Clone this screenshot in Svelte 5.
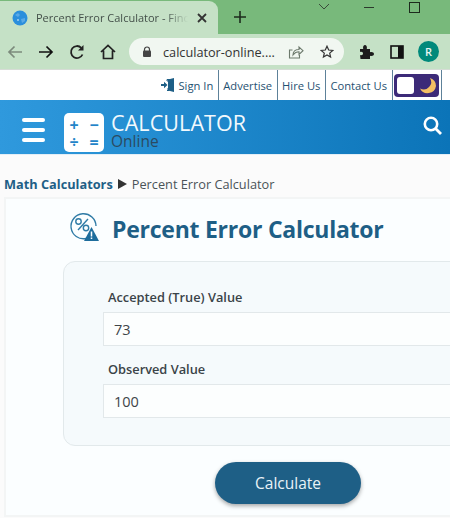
<script>
    let accepted = "73";
    let observed = "100";
    const links = ["Advertise", "Hire Us", "Contact Us"];
</script>

<div class="page">
    <div class="tabstrip">
        <div class="tab">
            <svg class="favicon" width="16" height="16" viewBox="0 0 16 16">
                <circle cx="8" cy="8" r="7.500" fill="#2b8fdc" />
                <path d="M3 5l3-2 2 2-2 2zM9 9l4-1 0 3-3 2z" fill="#5aa9e6" />
                <circle cx="6" cy="10" r="1" fill="#a6d0f0" />
            </svg>
            <span class="tabtitle">Percent Error Calculator - Find</span>
            <svg class="tabclose" width="10" height="10" viewBox="0 0 10 10">
                <path d="M1 1l8 8M9 1l-8 8" stroke="#333" stroke-width="1.800" />
            </svg>
        </div>
        <svg class="newtab" width="12" height="12" viewBox="0 0 12 12">
            <path d="M6 0v12M0 6h12" stroke="#1d2b1d" stroke-width="1.600" />
        </svg>
        <div class="winctl">
            <svg width="12" height="8" viewBox="0 0 12 8">
                <path d="M1 1l5 5 5-5" fill="none" stroke="#3a4a3a" stroke-width="1" />
            </svg>
            <span class="min"></span>
            <span class="max"></span>
        </div>
    </div>

    <div class="toolbar">
        <svg class="nav" width="16" height="14" viewBox="0 0 16 14">
            <path d="M15 7H2M7.500 1.500L2 7l5.500 5.500" fill="none" stroke="#7c8a7c" stroke-width="1.700" />
        </svg>
        <svg class="nav" width="16" height="14" viewBox="0 0 16 14">
            <path d="M1 7h13M8.500 1.500L14 7l-5.500 5.500" fill="none" stroke="#111" stroke-width="1.700" />
        </svg>
        <svg class="nav" width="16" height="16" viewBox="0 0 16 16">
            <path d="M13.500 10.500A6 6 0 1 1 12.300 3.800" fill="none" stroke="#222" stroke-width="1.800" />
            <path d="M14.500 1v5.500H9z" fill="#222" />
        </svg>
        <svg class="nav" width="16" height="16" viewBox="0 0 16 16">
            <path d="M1 8l7-6.500L15 8M3.500 6.500V14.500h9V6.500" fill="none" stroke="#222" stroke-width="1.700" />
        </svg>
        <div class="omnibox">
            <svg width="10" height="11" viewBox="0 0 10 11">
                <path d="M2.500 5V3.500a2.500 2.500 0 0 1 5 0V5" fill="none" stroke="#444" stroke-width="1.200" />
                <rect x="1" y="4.500" width="8" height="6.500" rx="1" fill="#444" />
            </svg>
            <span class="url">calculator-online....</span>
            <svg class="share" width="16" height="14" viewBox="0 0 16 14">
                <path d="M4.500 5H1.500v8h10v-3" fill="none" stroke="#6d7a6d" stroke-width="1.100" />
                <path d="M5 10c0-4 3-5.500 6-5.500V2l4 3.700-4 3.700V6.800C8.500 6.800 6.500 8 5 10z" fill="none" stroke="#6d7a6d" stroke-width="1.100" />
            </svg>
            <svg width="14" height="14" viewBox="0 0 14 14">
                <path d="M7 1.200l1.700 3.800 4.100.4-3.100 2.700.9 4-3.600-2.100-3.600 2.100.9-4L1.200 5.400l4.100-.4z" fill="none" stroke="#333" stroke-width="1.200" />
            </svg>
        </div>
        <svg class="puzzle" width="15" height="15" viewBox="0 0 15 15">
            <path d="M1 5h3.200C3.600 2.500 4.800 1 6 1s2.400 1.500 1.800 4H11v3.200c2.300-.6 4 .4 4 1.800s-1.700 2.400-4 1.800V15H1.500L1 11c2 .6 3-.3 3-1.500S3 7.400 1 8z" fill="#1c1c1c" />
        </svg>
        <svg class="panel" width="14" height="14" viewBox="0 0 14 14">
            <rect x="1" y="1" width="12" height="12" fill="none" stroke="#111" stroke-width="1.600" />
            <rect x="8" y="1" width="5" height="12" fill="#111" />
        </svg>
        <span class="avatar">R</span>
    </div>

    <nav class="topnav">
        <a class="signin" href="#top">
            <svg width="14" height="14" viewBox="0 0 14 14">
                <path d="M7 1.500L13 0v14l-6-1.500z" fill="#1e5f86" />
                <path d="M8 3H6V1.500h6M6 11h2v1.500H6" fill="none" stroke="#1e5f86" stroke-width="1" />
                <path d="M0 6h3V3.800L6.500 7 3 10.200V8H0z" fill="#1e5f86" />
            </svg>
            Sign In
        </a>
        {#each links as link}
            <a href="#top">{link}</a>
        {/each}
        <div class="toggle-cell">
            <div class="toggle">
                <span class="knob"></span>
                <svg width="18" height="18" viewBox="0 0 18 18">
                    <path d="M11 1a7.500 7.500 0 0 1-10 10.500A8.500 8.500 0 0 0 17 9a8.500 8.500 0 0 0-6-8z" fill="#f4bf63" />
                </svg>
            </div>
        </div>
    </nav>

    <header class="banner">
        <div class="burger"><i></i><i></i><i></i></div>
        <div class="logo">
            <span>+</span><span>−</span><span>÷</span><span>=</span>
        </div>
        <div class="brand">
            <span class="brand-top">CALCULATOR</span>
            <span class="brand-sub">Online</span>
        </div>
        <svg class="search" width="19" height="19" viewBox="0 0 19 19">
            <circle cx="8" cy="8" r="6.200" fill="none" stroke="#fff" stroke-width="2.600" />
            <path d="M12.500 12.500L18 18" stroke="#fff" stroke-width="2.800" />
        </svg>
    </header>

    <div class="crumbs">
        <a href="#top">Math Calculators</a>
        <span class="arrow"></span>
        <span>Percent Error Calculator</span>
    </div>

    <main class="card">
        <div class="title">
            <svg width="30" height="30" viewBox="0 0 30 30">
                <path d="M17 26.500A12.500 12.500 0 1 1 27 14" fill="none" stroke="#2f7ba6" stroke-width="1.400" />
                <path d="M9 18L19 7" stroke="#2f7ba6" stroke-width="1.400" />
                <circle cx="9.500" cy="9.500" r="2.700" fill="none" stroke="#2f7ba6" stroke-width="1.400" />
                <circle cx="17" cy="16" r="2.700" fill="none" stroke="#2f7ba6" stroke-width="1.400" />
                <path d="M22.500 15L30 29H15z" fill="#1e6d9c" />
                <path d="M22.500 19.500v5M22.500 25.500v1.500" stroke="#fff" stroke-width="1.500" />
            </svg>
            <h1>Percent Error Calculator</h1>
        </div>

        <form class="panel-form" on:submit|preventDefault>
            <label for="accepted">Accepted (True) Value</label>
            <input id="accepted" type="text" bind:value={accepted} />
            <label for="observed">Observed Value</label>
            <input id="observed" type="text" bind:value={observed} />
        </form>

        <button class="calc" type="button">Calculate</button>
    </main>
</div>

<style>
    :global(body) {
        margin: 0;
        background: #fbfbfb;
    }

    .page {
        width: 450px;
        height: 518px;
        overflow: hidden;
        font-family: "Open Sans", "Noto Sans", sans-serif;
        background: #fbfbfb;
    }

    .tabstrip {
        height: 34px;
        background: #78b97b;
        display: flex;
        align-items: flex-end;
        position: relative;
    }

    .tab {
        width: 218px;
        height: 33px;
        box-sizing: border-box;
        background: #c5e1c6;
        border-radius: 0 9px 0 0;
        display: flex;
        align-items: center;
        padding: 0 11px 0 12px;
    }

    .favicon {
        flex: none;
        margin-right: 8px;
    }

    .tabtitle {
        flex: 1;
        overflow: hidden;
        white-space: nowrap;
        font-size: 11px;
        color: #44504a;
        -webkit-mask-image: linear-gradient(90deg, #000 85%, transparent);
        mask-image: linear-gradient(90deg, #000 85%, transparent);
    }

    .tabclose {
        flex: none;
        margin-left: 9px;
    }

    .newtab {
        margin: 0 0 11px 16px;
    }

    .winctl {
        position: absolute;
        top: 0;
        left: 318px;
        display: flex;
        align-items: flex-start;
    }

    .winctl svg {
        margin-top: 3px;
    }

    .min {
        width: 10px;
        height: 1px;
        background: #2c3a2c;
        margin: 7px 0 0 34px;
    }

    .max {
        width: 9px;
        height: 9px;
        border: 1px solid #1d2b1d;
        margin: 2px 0 0 35px;
    }

    .toolbar {
        height: 35px;
        background: #c5e1c6;
        border-bottom: 1px solid #d6dcd6;
        display: flex;
        align-items: center;
        padding-left: 7px;
    }

    .nav {
        flex: none;
        margin-right: 15px;
    }

    .omnibox {
        width: 215px;
        height: 27px;
        margin-left: -2px;
        box-sizing: border-box;
        border-radius: 14px;
        background: #f1f7f1;
        display: flex;
        align-items: center;
        padding: 0 10px 0 13px;
    }

    .url {
        flex: 1;
        margin-left: 11px;
        font-size: 12.700px;
        color: #333;
        white-space: nowrap;
    }

    .share {
        margin-right: 16px;
    }

    .puzzle {
        margin-left: 15px;
    }

    .panel {
        margin-left: 16px;
    }

    .avatar {
        width: 21px;
        height: 21px;
        margin-left: 14px;
        border-radius: 50%;
        background: #00897b;
        color: #e8f5f3;
        font-size: 11px;
        font-weight: 600;
        display: flex;
        align-items: center;
        justify-content: center;
    }

    .topnav {
        height: 30px;
        background: #fff;
        display: flex;
        justify-content: flex-end;
        align-items: stretch;
        padding-right: 8px;
    }

    .topnav a {
        display: flex;
        align-items: center;
        padding: 0 5px 0 4px;
        border-left: 1px solid #5d8199;
        font-size: 11.200px;
        color: #1f5171;
        text-decoration: none;
        white-space: nowrap;
    }

    .topnav a.signin {
        border-left: none;
        gap: 3px;
    }

    .toggle-cell {
        width: 48px;
        border-left: 1px solid #5d8199;
        border-right: 1px solid #5d8199;
        display: flex;
        justify-content: flex-start;
        padding-top: 4px;
    }

    .toggle {
        width: 45px;
        height: 23px;
        margin-left: 1px;
        box-sizing: border-box;
        padding: 0 2px 0 3px;
        border-radius: 4px;
        background: #3c2a78;
        display: flex;
        align-items: center;
        justify-content: space-between;
    }

    .knob {
        width: 17px;
        height: 17px;
        background: #fff;
        border-radius: 3px;
    }

    .banner {
        height: 55px;
        background: linear-gradient(90deg, #2f99dd, #0b74b8);
        border-bottom: 1px solid #e3eef6;
        box-sizing: border-box;
        display: flex;
        align-items: center;
        padding-left: 22px;
        padding-right: 8px;
    }

    .burger {
        width: 23px;
        display: flex;
        flex-direction: column;
        gap: 6px;
        margin-top: 6px;
    }

    .burger i {
        display: block;
        height: 4px;
        border-radius: 2px;
        background: #fff;
    }

    .logo {
        width: 40px;
        height: 39px;
        margin-left: 19px;
        margin-top: 11px;
        border-radius: 5px;
        background: #fff;
        color: #2284c8;
        display: grid;
        grid-template-columns: 1fr 1fr;
        align-items: center;
        justify-items: center;
        font-size: 16px;
        font-weight: 700;
        line-height: 1;
        padding: 4px 0 2px;
        box-sizing: border-box;
    }

    .brand {
        margin-left: 7px;
        margin-top: 6px;
        display: flex;
        flex-direction: column;
    }

    .brand-top {
        color: #f2f9fd;
        font-size: 21.500px;
        line-height: 22px;
        letter-spacing: 0.1px;
    }

    .brand-sub {
        color: #2b4a61;
        font-size: 15.500px;
        line-height: 15px;
    }

    .search {
        margin-left: auto;
        margin-top: -3px;
    }

    .crumbs {
        height: 42px;
        box-sizing: border-box;
        padding: 16px 0 0 4px;
        font-size: 12.750px;
        line-height: 18px;
        color: #4a5358;
        display: flex;
        align-items: center;
        white-space: nowrap;
    }

    .crumbs a {
        color: #1e5f86;
        font-weight: 700;
        text-decoration: none;
    }

    .arrow {
        width: 0;
        height: 0;
        margin: 0 5px;
        border-left: 9px solid #333;
        border-top: 5px solid transparent;
        border-bottom: 5px solid transparent;
    }

    .card {
        margin: 0 0 0 4px;
        height: 320px;
        background: #fbfeff;
        border: 2px solid #f3f5f5;
        border-right: none;
        box-sizing: border-box;
        padding-left: 57px;
    }

    .title {
        display: flex;
        align-items: center;
        height: 62px;
        box-sizing: border-box;
        padding: 0 0 6px 6px;
    }

    .title h1 {
        margin: 3px 0 0 13px;
        font-size: 23px;
        font-weight: 700;
        letter-spacing: -0.250px;
        color: #1e5f86;
        white-space: nowrap;
    }

    .panel-form {
        width: 420px;
        height: 185px;
        box-sizing: border-box;
        background: #f5fafc;
        border: 1px solid #e2e9eb;
        border-radius: 12px;
        padding: 26px 0 0 39px;
        display: flex;
        flex-direction: column;
        align-items: flex-start;
    }

    label {
        font-size: 12.800px;
        font-weight: 600;
        line-height: 18px;
        color: #3a4348;
        margin-left: 5px;
    }

    input {
        width: 360px;
        height: 34px;
        box-sizing: border-box;
        margin: 6px 0 14px;
        padding: 0 0 0 10px;
        background: #fcfefe;
        border: 1px solid #e2e8ea;
        font-family: inherit;
        font-size: 14.500px;
        color: #3e4549;
        outline: none;
    }

    .calc {
        display: block;
        width: 146px;
        height: 42px;
        margin: 16px 0 0 152px;
        border: none;
        border-radius: 21px;
        background: #1e5f86;
        box-shadow: 0 2px 4px rgba(0, 0, 0, 0.35);
        color: #e9f3f8;
        font-family: inherit;
        font-size: 15.500px;
    }
</style>
